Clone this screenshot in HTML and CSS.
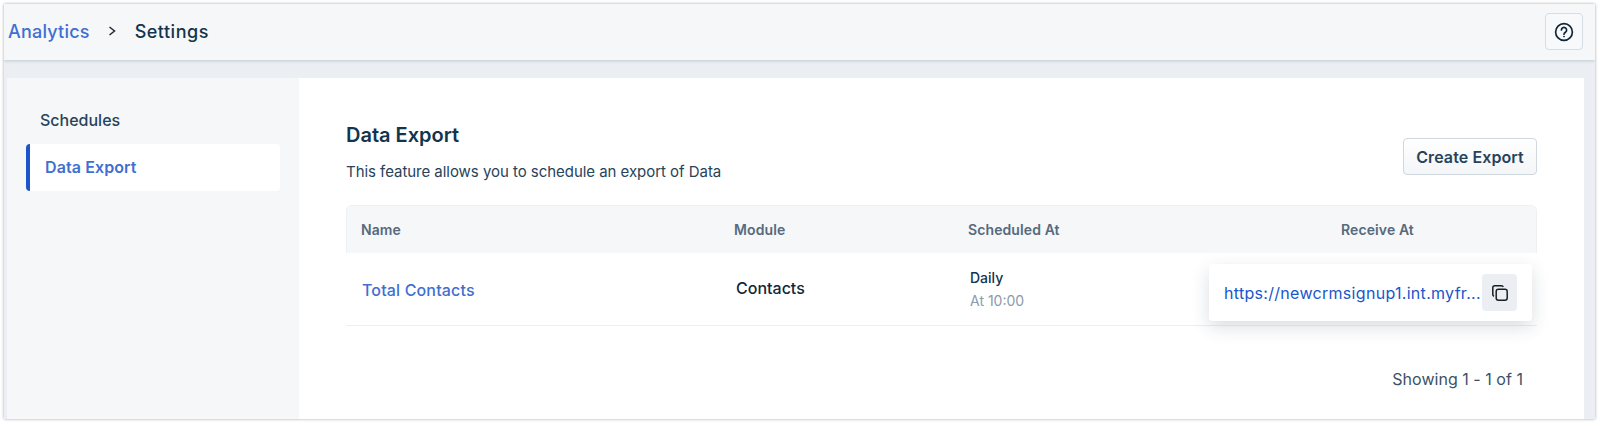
FILE: index.html
```html
<!DOCTYPE html>
<html lang="en">
<head>
  <meta charset="UTF-8">
  <title>Analytics - Settings</title>
  <link rel="stylesheet" href="styles.css">
</head>
<body>
<div class="window">
  <header class="topbar">
    <div class="crumbs">
      <a href="#" class="crumb-link">Analytics</a>
      <svg class="crumb-sep" width="12" height="12" viewBox="0 0 12 12"><path d="M3.5 2 8.5 6 3.5 10" fill="none" stroke="#1c2b3a" stroke-width="1.5"/></svg>
      <span class="crumb-current">Settings</span>
    </div>
    <button class="help-btn" aria-label="Help">
      <svg width="20" height="20" viewBox="0 0 20 20" fill="none" stroke="#12263a" stroke-width="1.7"><circle cx="10" cy="10" r="8.4"/><path d="M7.4 8a2.6 2.6 0 1 1 4 2.2c-.9.6-1.4 1-1.4 2" stroke-linecap="round"/><circle cx="10" cy="14.6" r=".5" fill="#12263a" stroke-width="1"/></svg>
    </button>
  </header>

  <div class="body">
    <nav class="sidebar">
      <a href="#" class="side-item">Schedules</a>
      <a href="#" class="side-item active">Data Export</a>
    </nav>

    <main class="content">
      <div class="head-row">
        <div>
          <h2>Data Export</h2>
          <p class="desc">This feature allows you to schedule an export of Data</p>
        </div>
        <button class="create-btn">Create Export</button>
      </div>

      <div class="table">
        <div class="row row-head">
          <div class="col-name">Name</div>
          <div class="col-module">Module</div>
          <div class="col-sched">Scheduled At</div>
          <div class="col-receive">Receive At</div>
        </div>
        <div class="row row-body">
          <div class="col-name"><a href="#" class="name-link">Total Contacts</a></div>
          <div class="col-module module-val">Contacts</div>
          <div class="col-sched">
            <div class="sched-main">Daily</div>
            <div class="sched-sub">At 10:00</div>
          </div>
          <div class="col-receive"></div>
          <div class="popover">
            <a href="#" class="url">https://newcrmsignup1.int.myfr...</a>
            <button class="copy-btn" aria-label="Copy">
              <svg width="20" height="20" viewBox="0 0 20 20" fill="none" stroke="#1a1f26" stroke-width="1.5"><path d="M4 13.2A1.8 1.8 0 0 1 2.8 11.5V4.8a2 2 0 0 1 2-2h6.7a1.8 1.8 0 0 1 1.7 1.2"/><rect x="6.2" y="6.2" width="11" height="11" rx="2.2"/></svg>
            </button>
          </div>
        </div>
      </div>

      <div class="pager">Showing 1 - 1 of 1</div>
    </main>
  </div>
</div>
</body>
</html>
```

FILE: styles.css
```css
* { margin: 0; padding: 0; box-sizing: border-box; }

html, body { height: 100%; }

body {
  font-family: 'Inter', sans-serif;
  background: #fff;
  padding: 4px 5px 4px 4px;
  color: #12344d;
}

a { text-decoration: none; }

.window {
  height: 415px;
  display: flex;
  flex-direction: column;
  background: #ebeff3;
  box-shadow: 0 0 3px rgba(0, 0, 0, 0.35);
  overflow: hidden;
}

/* Top bar */
.topbar {
  height: 56px;
  flex-shrink: 0;
  display: flex;
  align-items: center;
  justify-content: space-between;
  padding: 0 12px 0 4px;
  background: #f5f7f9;
  box-shadow: 0 1px 3px rgba(18, 52, 77, 0.2);
}

.crumbs {
  display: flex;
  align-items: center;
  margin-top: -2px;
  font-size: 18px;
  font-weight: 500;
  letter-spacing: 0.2px;
}

.crumb-link { color: #3f6fd1; }
.crumb-sep { margin: 0 17px 0 16px; }
.crumb-current { color: #12344d; letter-spacing: 0.5px; }

.help-btn {
  width: 38px;
  height: 37px;
  margin-top: -1px;
  display: flex;
  align-items: center;
  justify-content: center;
  background: #f7f9fa;
  border: 1px solid #d6dde4;
  border-radius: 4px;
}

/* Body */
.body {
  flex: 1;
  display: flex;
  margin: 18px 11px 0 3px;
  min-height: 0;
}

.sidebar {
  width: 292px;
  flex-shrink: 0;
  background: #f5f7f9;
  padding: 20px 19px;
}

.side-item {
  display: block;
  height: 46px;
  line-height: 45px;
  font-size: 16px;
  font-weight: 500;
  color: #27435a;
  padding-left: 14px;
}

.side-item.active {
  height: 47px;
  line-height: 47px;
  background: #fff;
  color: #3f6fd1;
  font-weight: 600;
  letter-spacing: 0.1px;
  border-left: 4px solid #1a56c9;
  border-radius: 4px;
  padding-left: 15px;
}

.content {
  flex: 1;
  background: #fff;
  padding: 46px 47px 0 47px;
}

.head-row {
  display: flex;
  justify-content: space-between;
  align-items: flex-start;
  height: 81px;
}

h2 {
  font-size: 20px;
  font-weight: 600;
  line-height: 22px;
  color: #12344d;
}

.desc {
  margin-top: 17px;
  font-size: 15px;
  line-height: 18px;
  letter-spacing: -0.04px;
  color: #27435a;
}

.create-btn {
  width: 134px;
  height: 37px;
  margin-top: 14px;
  font-family: inherit;
  font-size: 16px;
  font-weight: 600;
  letter-spacing: 0.1px;
  color: #27435a;
  background: linear-gradient(#fff, #f3f5f7);
  border: 1px solid #cfd7df;
  border-radius: 4px;
}

/* Table */
.table { width: 100%; }

.row {
  position: relative;
  display: grid;
  grid-template-columns: 373px 234px 373px 1fr;
  align-items: center;
}

.row-head {
  height: 48px;
  padding-left: 14px;
  background: #f5f7f9;
  border: 1px solid #eef1f4;
  border-bottom: none;
  border-radius: 6px 6px 0 0;
  font-size: 14px;
  font-weight: 600;
  letter-spacing: 0.1px;
  color: #566a7d;
}

.row-body {
  height: 73px;
  padding-left: 15px;
  border-bottom: 1px solid #ebeff3;
}

.name-link {
  position: relative;
  top: 1px;
  margin-left: 1px;
  font-size: 16px;
  font-weight: 500;
  letter-spacing: 0.15px;
  color: #3f6fd1;
}

.module-val {
  margin: -3px 0 0 2px;
  font-size: 16px;
  font-weight: 500;
  color: #12263a;
}

.row-body .col-sched { padding-left: 2px; }

.sched-main {
  font-size: 14px;
  font-weight: 500;
  line-height: 18px;
  color: #12344d;
}

.sched-sub {
  margin-top: 5px;
  font-size: 14px;
  line-height: 18px;
  color: #8a9bab;
}

/* URL popover sits over the last cell */
.popover {
  position: absolute;
  top: 11px;
  right: 5px;
  width: 323px;
  height: 57px;
  display: flex;
  align-items: center;
  padding-left: 15px;
  background: #fff;
  border-radius: 4px;
  box-shadow: 0 6px 18px rgba(18, 52, 77, 0.16);
}

.url {
  width: 258px;
  font-size: 16px;
  letter-spacing: 0.3px;
  color: #1a56c9;
  white-space: nowrap;
}

.copy-btn {
  width: 35px;
  height: 37px;
  display: flex;
  align-items: center;
  justify-content: center;
  background: #ebeff3;
  border: none;
  border-radius: 4px;
}

.pager {
  margin-top: 43px;
  padding-right: 14px;
  text-align: right;
  font-size: 16px;
  line-height: 20px;
  letter-spacing: 0.03px;
  color: #3b5266;
}
```
